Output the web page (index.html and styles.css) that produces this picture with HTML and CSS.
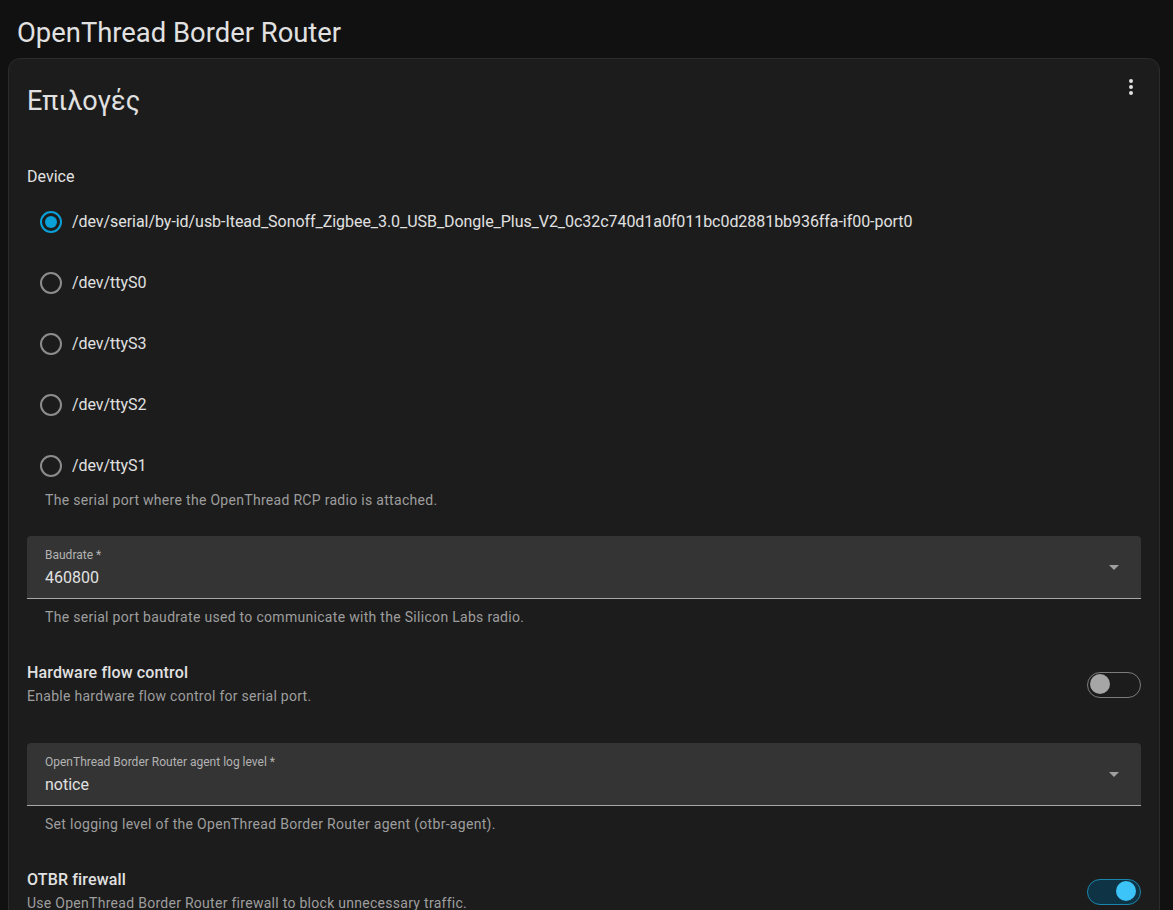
FILE: index.html
```html
<!DOCTYPE html>
<html lang="el">
<head>
<meta charset="utf-8">
<title>OpenThread Border Router</title>
<link rel="stylesheet" href="styles.css">
</head>
<body>
<header class="page-header">
  <h1 class="page-title">OpenThread Border Router</h1>
</header>
<section class="card">
  <div class="card-header">
    <h2 class="card-title">Επιλογές</h2>
    <button class="icon-btn" aria-label="menu">
      <svg viewBox="0 0 24 24" width="24" height="24"><path fill="currentColor" d="M12,16A2,2 0 0,1 14,18A2,2 0 0,1 12,20A2,2 0 0,1 10,18A2,2 0 0,1 12,16M12,10A2,2 0 0,1 14,12A2,2 0 0,1 12,14A2,2 0 0,1 10,12A2,2 0 0,1 12,10M12,4A2,2 0 0,1 14,6A2,2 0 0,1 12,8A2,2 0 0,1 10,6A2,2 0 0,1 12,4Z"/></svg>
    </button>
  </div>
  <div class="card-content">
    <div class="group-label">Device</div>
    <div class="radio-group">
      <label class="radio-row"><span class="radio checked"></span><span class="radio-text">/dev/serial/by-id/usb-Itead_Sonoff_Zigbee_3.0_USB_Dongle_Plus_V2_0c32c740d1a0f011bc0d2881bb936ffa-if00-port0</span></label>
      <label class="radio-row"><span class="radio"></span><span class="radio-text">/dev/ttyS0</span></label>
      <label class="radio-row"><span class="radio"></span><span class="radio-text">/dev/ttyS3</span></label>
      <label class="radio-row"><span class="radio"></span><span class="radio-text">/dev/ttyS2</span></label>
      <label class="radio-row"><span class="radio"></span><span class="radio-text">/dev/ttyS1</span></label>
    </div>
    <div class="helper helper-radio">The serial port where the OpenThread RCP radio is attached.</div>

    <div class="select-field field-baud">
      <div class="field-text">
        <div class="field-label">Baudrate *</div>
        <div class="field-value">460800</div>
      </div>
      <svg class="field-arrow" viewBox="0 0 24 24" width="24" height="24"><path fill="currentColor" d="M7,10L12,15L17,10H7Z"/></svg>
    </div>
    <div class="helper helper-field">The serial port baudrate used to communicate with the Silicon Labs radio.</div>

    <div class="toggle-row row-flow">
      <div class="toggle-text">
        <div class="toggle-title">Hardware flow control</div>
        <div class="toggle-desc">Enable hardware flow control for serial port.</div>
      </div>
      <span class="switch"><span class="thumb"></span></span>
    </div>

    <div class="select-field field-log">
      <div class="field-text">
        <div class="field-label">OpenThread Border Router agent log level *</div>
        <div class="field-value">notice</div>
      </div>
      <svg class="field-arrow" viewBox="0 0 24 24" width="24" height="24"><path fill="currentColor" d="M7,10L12,15L17,10H7Z"/></svg>
    </div>
    <div class="helper helper-field">Set logging level of the OpenThread Border Router agent (otbr-agent).</div>

    <div class="toggle-row row-firewall">
      <div class="toggle-text">
        <div class="toggle-title">OTBR firewall</div>
        <div class="toggle-desc">Use OpenThread Border Router firewall to block unnecessary traffic.</div>
      </div>
      <span class="switch on"><span class="thumb"></span></span>
    </div>
  </div>
</section>
</body>
</html>
```
FILE: styles.css
```css
* { box-sizing: border-box; }
html, body { margin: 0; padding: 0; }
body {
  background: #111111;
  color: #e1e1e1;
  font-family: Roboto, "Noto Sans", "DejaVu Sans", sans-serif;
  height: 910px;
  overflow: hidden;
}
.page-header {
  padding: 21px 0 13px 17px;
}
.page-title {
  margin: 0;
  font-size: 27.4px;
  font-weight: 400;
  line-height: 24px;
  color: #e1e1e1;
}
.card {
  margin: 0 13px 0 8px;
  background: #1c1c1c;
  border: 1px solid #2b2b2b;
  border-radius: 12px;
  padding-bottom: 40px;
}
.card-header {
  display: flex;
  justify-content: space-between;
  align-items: flex-start;
  padding: 0 4px 0 18px;
}
.card-title {
  margin: 22px 0 0 0;
  font-size: 27px;
  font-weight: 400;
  line-height: 40px;
  color: #e1e1e1;
}
.icon-btn {
  margin-top: 4px;
  width: 48px;
  height: 48px;
  border: 0;
  background: transparent;
  color: #e1e1e1;
  display: flex;
  align-items: center;
  justify-content: center;
  padding: 0;
}
.card-content {
  padding: 0 18px;
}
.group-label {
  margin-top: 46px;
  font-size: 16px;
  line-height: 20px;
  color: #e1e1e1;
}
.radio-group {
  margin-top: 11px;
  display: flex;
  flex-direction: column;
  gap: 13px;
}
.radio-row {
  height: 48px;
  display: flex;
  align-items: center;
  padding-left: 13px;
  gap: 10px;
}
.radio {
  width: 22px;
  height: 22px;
  border-radius: 50%;
  border: 2px solid #8c8c8c;
  display: flex;
  align-items: center;
  justify-content: center;
  flex: none;
}
.radio.checked {
  border-color: #0aa0d8;
}
.radio.checked::after {
  content: "";
  width: 12px;
  height: 12px;
  border-radius: 50%;
  background: #0aa0d8;
}
.radio-text {
  font-size: 16px;
  line-height: 24px;
  letter-spacing: -0.05px;
  color: #e1e1e1;
}
.helper {
  font-size: 14px;
  line-height: 20px;
  letter-spacing: 0.3px;
  color: #9e9e9e;
  padding-left: 18px;
}
.helper-radio { margin-top: 0; }
.helper-field { margin-top: 8px; }
.select-field {
  height: 63px;
  background: #343434;
  border-radius: 4px 4px 0 0;
  border-bottom: 1px solid #a8a8a8;
  display: flex;
  align-items: center;
  justify-content: space-between;
  padding: 0 15px 0 18px;
}
.field-baud { margin-top: 26px; }
.field-log { margin-top: 37px; }
.field-text {
  align-self: flex-start;
  padding-top: 11px;
}
.field-label {
  font-size: 12px;
  line-height: 16px;
  color: #b3b3b3;
}
.field-value {
  margin-top: 3px;
  font-size: 16px;
  line-height: 24px;
  color: #e1e1e1;
}
.field-arrow {
  color: #a0a0a0;
  flex: none;
}
.toggle-row {
  margin-top: 34px;
  display: flex;
  align-items: center;
  justify-content: space-between;
}
.toggle-title {
  font-size: 16px;
  font-weight: 500;
  line-height: 24px;
  letter-spacing: 0.15px;
  color: #e1e1e1;
}
.toggle-desc {
  margin-top: 1px;
  font-size: 14px;
  line-height: 20px;
  letter-spacing: 0.28px;
  color: #9e9e9e;
}
.switch {
  position: relative;
  width: 54px;
  height: 26px;
  border-radius: 13px;
  border: 1.5px solid #7c7c7c;
  background: #1c1c1c;
  flex: none;
  margin-top: 2px;
}
.switch .thumb {
  position: absolute;
  top: 1.5px;
  left: 1.5px;
  width: 20px;
  height: 20px;
  border-radius: 50%;
  background: #a6a6a6;
}
.switch.on {
  background: #0d3344;
  border-color: #1a86ad;
}
.switch.on .thumb {
  left: 27.5px;
  background: #3cc3f7;
}
```
